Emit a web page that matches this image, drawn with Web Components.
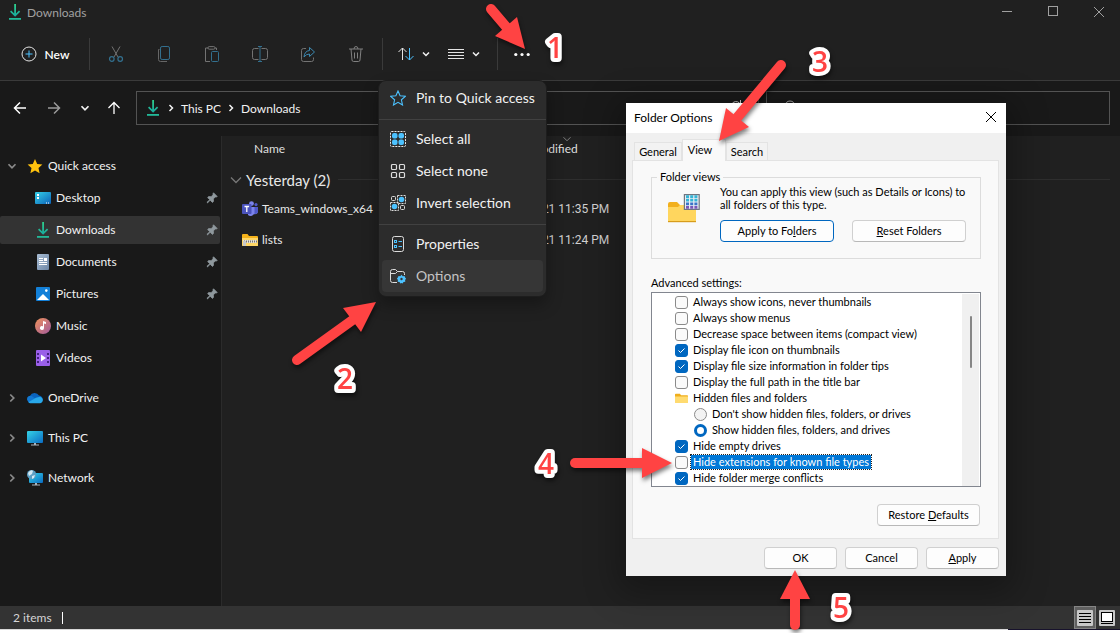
<!DOCTYPE html>
<html lang="en">
<head>
<meta charset="utf-8">
<meta name="viewport" content="width=device-width, initial-scale=1">
<title>Downloads</title>
<style>
    * { box-sizing: border-box; }
    body {
        margin: 0;
        min-height: 100vh;
        position: relative;
        display: flex;
        flex-direction: column;
        background: #ffffff;
        font-family: Lato, "Open Sans", sans-serif;
        font-size: 12px;
        color: #f2f2f2;
    }
    explorer-window { flex: 1; }
    footer { height: 4px; background: linear-gradient(90deg, #d8d8d8 90%, #17122c 90%) top / 100% 1px no-repeat #ffffff; }
    context-menu { position: absolute; left: 378px; top: 80px; }
    folder-options { position: absolute; left: 626px; top: 103px; }
    callout-layer { position: absolute; left: 0; top: 0; }
</style>
</head>
<body>
    <explorer-window>
        <title-bar slot="title">Downloads</title-bar>
        <command-bar slot="commands"></command-bar>
        <address-bar slot="address"></address-bar>
        <side-nav slot="nav">
            <nav-item icon="star" chevron="down">Quick access</nav-item>
            <nav-item icon="desktop" child pinned>Desktop</nav-item>
            <nav-item icon="download" child pinned selected>Downloads</nav-item>
            <nav-item icon="document" child pinned>Documents</nav-item>
            <nav-item icon="picture" child pinned>Pictures</nav-item>
            <nav-item icon="music" child>Music</nav-item>
            <nav-item icon="video" child>Videos</nav-item>
            <nav-item icon="cloud" chevron="right" root>OneDrive</nav-item>
            <nav-item icon="pc" chevron="right" root>This PC</nav-item>
            <nav-item icon="network" chevron="right" root>Network</nav-item>
        </side-nav>
        <file-list slot="files"></file-list>
        <status-bar slot="status">2 items</status-bar>
    </explorer-window>
    <footer></footer>

    <context-menu>
        <menu-item icon="starline">Pin to Quick access</menu-item>
        <hr>
        <menu-item icon="selall">Select all</menu-item>
        <menu-item icon="selnone">Select none</menu-item>
        <menu-item icon="selinv">Invert selection</menu-item>
        <hr>
        <menu-item icon="props">Properties</menu-item>
        <menu-item icon="options" active>Options</menu-item>
    </context-menu>

    <folder-options heading="Folder Options">
        <option-row>Always show icons, never thumbnails</option-row>
        <option-row>Always show menus</option-row>
        <option-row>Decrease space between items (compact view)</option-row>
        <option-row checked>Display file icon on thumbnails</option-row>
        <option-row checked>Display file size information in folder tips</option-row>
        <option-row>Display the full path in the title bar</option-row>
        <option-row type="folder">Hidden files and folders</option-row>
        <option-row type="radio">Don't show hidden files, folders, or drives</option-row>
        <option-row type="radio" checked>Show hidden files, folders, and drives</option-row>
        <option-row checked>Hide empty drives</option-row>
        <option-row highlighted>Hide extensions for known file types</option-row>
        <option-row checked>Hide folder merge conflicts</option-row>
    </folder-options>

    <callout-layer></callout-layer>

<script>
const ICONS = {
    download: `<defs><linearGradient id="g" x1="0" y1="0" x2="0" y2="1"><stop offset="0" stop-color="#2fd08b"/><stop offset="1" stop-color="#17a8a0"/></linearGradient></defs>
        <path d="M7.2 0h1.8v9.6l3-3 1.2 1.2-5.1 5-5.1-5 1.2-1.2 3 3z" fill="url(#g)"/><path d="M2 14h12v1.8H2z" fill="#22b999"/>`,
    star: `<path d="M8 1l2.2 4.9 5.2.5-3.9 3.6 1.1 5.3L8 12.6l-4.6 2.7 1.1-5.3L.6 6.4l5.2-.5z" fill="#ffc20e"/>`,
    desktop: `<defs><linearGradient id="g" x1="0" y1="0" x2="1" y2="1"><stop offset="0" stop-color="#34d0e8"/><stop offset="1" stop-color="#0c62b8"/></linearGradient></defs>
        <rect y="2" width="16" height="12" rx="1" fill="url(#g)"/><path d="M2 4h2v2H2zM2 7h2v2H2zM11 12.5h1v1h-1zM13 12.5h1v1h-1z" fill="#fff"/>`,
    document: `<defs><linearGradient id="g" x1="0" y1="0" x2="1" y2="1"><stop offset="0" stop-color="#a9bdd4"/><stop offset="1" stop-color="#6c86a6"/></linearGradient></defs>
        <rect x="2" width="12" height="16" rx="1" fill="url(#g)"/><path d="M4 4h4v1H4zM4 6h4v1H4zM9 4h3v3H9zM4 8h8v1H4zM4 10h8v1H4z" fill="#fff"/>`,
    picture: `<rect x="1" y="1" width="14" height="14" rx="1" fill="#1380d8"/><path d="M2 14l6-6 6 6z" fill="#fff"/><circle cx="11.3" cy="4.6" r="1.3" fill="#fff"/>`,
    music: `<defs><linearGradient id="g" x1="0" y1="0" x2="1" y2="1"><stop offset="0" stop-color="#f0925a"/><stop offset="1" stop-color="#a05a9e"/></linearGradient></defs>
        <circle cx="8" cy="8" r="8" fill="url(#g)"/><path d="M8 3l3 1v2L9 5.4V10a2 2 0 1 1-1-1.7z" fill="#fff"/>`,
    video: `<rect x="1" width="14" height="16" rx="1" fill="#9a5fe8"/><path d="M2 3h2v2H2zM2 7h2v2H2zM2 11h2v2H2zM12 3h2v2h-2zM12 7h2v2h-2zM12 11h2v2h-2z" fill="#43207e"/><path d="M6 4.6L11 8l-5 3.4z" fill="#fff"/>`,
    cloud: `<path d="M3.4 12.5A3.4 3.4 0 0 1 3 6 5 5 0 0 1 12 5.6a3.6 3.6 0 0 1 3.4 5z" fill="#0a63bd"/><path d="M.2 10A3.3 3.3 0 0 1 4.6 6L14 12.4H3A3 3 0 0 1 .2 10z" fill="#1278d2"/><path d="M1.3 12.3L9 7.8l3-.9a3.3 3.3 0 0 1 3 5.4q-1 .9-2 .9H3.4q-1.3 0-2.1-.9z" fill="#28a8ea"/>`,
    pc: `<defs><linearGradient id="g" x1="0" y1="0" x2="1" y2="1"><stop offset="0" stop-color="#35d3e6"/><stop offset="1" stop-color="#0b6cc4"/></linearGradient></defs>
        <rect y="1" width="16" height="12" rx="1" fill="url(#g)"/><path d="M7 13h2v1.4h3v1H4v-1h3z" fill="#a9b4bd"/>`,
    network: `<defs><linearGradient id="g" x1="0" y1="0" x2="1" y2="1"><stop offset="0" stop-color="#35d3e6"/><stop offset="1" stop-color="#0b6cc4"/></linearGradient></defs>
        <rect x="2" y="3" width="14" height="10" rx="1" fill="url(#g)"/><path d="M8 13h2v1.6h3v1H5v-1h3z" fill="#a9b4bd"/><circle cx="4.6" cy="4.6" r="4.6" fill="#5d9fc4"/><path d="M1 3q3-4 5-2l-1 3-3 2zM5 6l3-1-1 3-2 1z" fill="#d4e9f4"/>`,
    pin: `<path d="M10 1l5 5-1.6.8-1-.3-2.6 2.7.2 3.3-1.5 1.4-3-3L2 14.6l-.8-.8L5 10.3 2.2 7.4l1.4-1.3 3.2.1L9.5 3.6 9.2 2.5z" fill="#8f989d" stroke="#8f989d"/>`,
    chevdown: `<path d="M4 6l4 4 4-4" fill="none" stroke="currentColor" stroke-width="2"/>`,
    chevthin: `<path d="M4 6l4 4 4-4" fill="none" stroke="currentColor"/>`,
    chevright: `<path d="M6 4l4 4-4 4" fill="none" stroke="currentColor" stroke-width="2"/>`,
    plus: `<circle cx="8" cy="8" r="7" fill="none" stroke="#e4e4e4"/><path d="M8 4.5v7M4.5 8h7" stroke="#4cc2ff"/>`,
    cut: `<path d="M4 0.5l6 10.5M12 .5L6 11" stroke="#737373" fill="none"/><g fill="none" stroke="#33708f" stroke-width="1.2"><circle cx="3.8" cy="13" r="2.3"/><circle cx="12.2" cy="13" r="2.3"/></g>`,
    copy: `<path d="M3.5 3.5h-1v10q0 2 2 2h6.5" fill="none" stroke="#666"/><rect x="4.5" y=".5" width="9" height="13" rx="1.6" fill="none" stroke="#33708f"/>`,
    paste: `<path d="M4 2H1.5v13.5H6M11 2h1.5v2" fill="none" stroke="#737373"/><rect x="4" y=".6" width="7" height="2.6" rx="1.2" fill="none" stroke="#737373"/><rect x="7.5" y="5.5" width="7" height="10" rx="1" fill="none" stroke="#33708f"/>`,
    rename: `<path d="M6.5 2.5h-4q-2 0-2 2v7q0 2 2 2h4M9.5 2.5h4q2 0 2 2v7q0 2-2 2h-4" fill="none" stroke="#737373"/><path d="M8 .5v15M6 .5h4M6 15.5h4" stroke="#33708f" fill="none"/>`,
    share: `<path d="M6 2.5H3.5q-2 0-2 2v9q0 2 2 2h8q2 0 2-2v-2" fill="none" stroke="#737373"/><path d="M9.5 1.5l5 4.5-5 4.5V8Q6 8 4 11q.5-6 5.5-6.5z" fill="none" stroke="#3b88b0"/>`,
    trash: `<path d="M1 3h14M3 3l1 11q.1 1.5 1.6 1.5h4.8q1.5 0 1.6-1.5l1-11M6 3q0-2.5 2-2.5T10 3M6.5 6.5v6M9.5 6.5v6" fill="none" stroke="#808080"/>`,
    sort: `<path d="M4.5 14V2M.5 6l4-4 4 4" fill="none" stroke="#e4e4e4"/><path d="M11.5 2v12M7.5 10l4 4 4-4" fill="none" stroke="#4cc2ff"/>`,
    lines: `<path d="M0 3.5h16M0 6.5h16M0 9.5h16M0 12.5h16" stroke="#e4e4e4"/>`,
    dots: `<g fill="#fff"><circle cx="1.8" cy="8.5" r="1.6"/><circle cx="8" cy="8.5" r="1.6"/><circle cx="14.2" cy="8.5" r="1.6"/></g>`,
    back: `<path d="M14 8H2.5M8 2.5L2.5 8 8 13.5" fill="none" stroke="#fff" stroke-width="1.5"/>`,
    forward: `<path d="M2 8h11.5M8 2.5L13.5 8 8 13.5" fill="none" stroke="#9a9a9a" stroke-width="1.5"/>`,
    up: `<path d="M8 14V2.5M2.5 8L8 2.5 13.5 8" fill="none" stroke="#fff" stroke-width="1.3"/>`,
    refresh: `<path d="M13 7a5 5 0 1 1-1.5-4M12.5 0v3.5H9" fill="none" stroke="#ccc"/>`,
    search: `<circle cx="9" cy="6" r="5" fill="none" stroke="#aaa"/><path d="M5.5 9.5L2 13.5" stroke="#aaa"/>`,
    min: `<path d="M3 7.5h10" stroke="currentColor"/>`,
    max: `<rect x="3.5" y="2.5" width="9" height="9" fill="none" stroke="currentColor"/>`,
    close: `<path d="M3 3l10 10M13 3L3 13" stroke="currentColor"/>`,
    teams: `<circle cx="9.5" cy="2.6" r="2.4" fill="#7b83eb"/><circle cx="14" cy="3.6" r="1.6" fill="#5059c9"/><path d="M6 6h10v4.5a3 3 0 0 1-4 2.5 4 4 0 0 1-6 1z" fill="#7b83eb"/><path d="M12.5 6H16v4.5a3 3 0 0 1-3.5 2.5z" fill="#5059c9"/><rect y="3" width="9.5" height="10" rx="1" fill="#4b53bc"/><path d="M2.5 5.5h4.6M4.8 5.5v5.5" stroke="#fff" stroke-width="1.3"/>`,
    zip: `<path d="M0 3q0-1 1-1h4.5L7 4h8q1 0 1 1v8q0 1-1 1H1q-1 0-1-1z" fill="#f5b21a"/><path d="M0 6h16v7.5q0 .5-1 .5H1q-1 0-1-1z" fill="#ffd766"/><path d="M1 9.5h14" stroke="#e8e3d6" stroke-width="3"/><path d="M2 9.5h13" stroke="#767676" stroke-width="2" stroke-dasharray="1 1"/><rect x="1" y="9" width="3" height="5" fill="#c9c9c9"/>`,
    folder: `<path d="M0 3q0-1 1-1h5l1.5 2H15q1 0 1 1v8H0z" fill="#f0ae1c"/><path d="M0 5.5h16v7q0 1-1 1H1q-1 0-1-1z" fill="#ffdb70"/>`,
    starline: `<path d="M8 1l2.1 4.8 5.2.5-3.9 3.5 1.1 5.2L8 12.3 3.5 15l1.1-5.2L.7 6.3l5.2-.5z" fill="none" stroke="#4cc2ff" stroke-width="1.1"/>`,
    selall: `<rect x=".5" y=".5" width="15" height="15" rx="1" fill="none" stroke="#e8e8e8" stroke-dasharray="2 1"/><g fill="#4cc2ff"><rect x="2" y="2" width="5.5" height="5.5" rx="2"/><rect x="8.5" y="2" width="5.5" height="5.5" rx="2"/><rect x="2" y="8.5" width="5.5" height="5.5" rx="2"/><rect x="8.5" y="8.5" width="5.5" height="5.5" rx="2"/></g>`,
    selnone: `<g fill="none" stroke="#dcdcdc" stroke-width="1.2"><rect x="1.5" y="1.5" width="5" height="5" rx="1"/><rect x="9.5" y="1.5" width="5" height="5" rx="1"/><rect x="1.5" y="9.5" width="5" height="5" rx="1"/><rect x="9.5" y="9.5" width="5" height="5" rx="1"/></g>`,
    selinv: `<g fill="none" stroke="#dcdcdc"><rect x="1.5" y="1.5" width="4" height="4" rx="1"/><rect x="10.5" y="10.5" width="4" height="4" rx="1"/><path d="M7.5.5h8v8h-8zM.5 7.5h8v8h-8z" stroke-dasharray="2 1"/></g><circle cx="11.5" cy="4.5" r="2.8" fill="#4cc2ff"/><circle cx="4.5" cy="11.5" r="2.8" fill="#4cc2ff"/>`,
    props: `<rect x="2.5" y=".5" width="11" height="15" rx="2" fill="none" stroke="#dcdcdc"/><g fill="none" stroke="#4cc2ff"><rect x="4.5" y="4.5" width="2" height="2"/><rect x="4.5" y="9.5" width="2" height="2"/><path d="M8.5 5.5h3.5M8.5 10.5h3.5"/></g>`,
    options: `<path d="M7 14.5H2.5q-2 0-2-2v-9q0-2 2-2h3l2 2h5q2 0 2 2V7M.5 5.5H5.5l2-2" fill="none" stroke="#dcdcdc"/><path d="M11.5 6.8l1.2 1.4 1.8-.3.6 1.7 1 .9-1 1.5.2 1.7-1.8.2-.9 1.5-1.1-.5-1.1.5-.9-1.5-1.8-.2.2-1.7-1-1.5 1-.9.6-1.7 1.8.3z" fill="#4cc2ff"/><circle cx="11.5" cy="11" r="1.2" fill="#333"/>`,
    bigfolder: `<path d="M0 5.5q0-1 1-1h3.5l1.5 1.5H14v6.5H0z" fill="#f2b01e"/><path d="M0 7h5l1-1h8v8.5H0z" fill="#ffd65e"/><path d="M0 14h14v.6H0z" fill="#d79c1c"/><rect x="8.2" y=".8" width="7.4" height="7.4" fill="#e9eef4" stroke="#6f7680" stroke-width=".6"/><path d="M9 1.8h6M9 3.6h6" stroke="#35b5d6" stroke-width="1.4" stroke-dasharray="1.5 .6"/><path d="M9 5.4h6" stroke="#3a74c8" stroke-width="1.4" stroke-dasharray="1.5 .6"/><path d="M9 7.2h6" stroke="#7a58b8" stroke-width="1.3" stroke-dasharray="1.5 .6"/>`,
    details: `<rect width="16" height="16" rx="1" fill="#c8c8c8"/><path d="M2 3.5h12M2 6.5h12M2 9.5h12M2 12.5h12" stroke="#000"/>`,
    thumbs: `<rect width="16" height="16" rx="1" fill="#c8c8c8"/><rect x="2.5" y="2.5" width="11" height="9" fill="#fff" stroke="#000"/><path d="M2 13.5h12" stroke="#000"/>`
};

class BaseElement extends HTMLElement {
    constructor() {
        super();
        this.attachShadow({ mode: "open" });
    }

    connectedCallback() {
        const template = document.createElement("template");
        template.innerHTML = `
            <style>
                *, :host { box-sizing: border-box; }
                button { font: inherit; color: inherit; background: none; border: 0; padding: 0; margin: 0; }
                ${this.getStyles()}
            </style>
            ${this.getMarkup()}
        `;
        this.shadowRoot.appendChild(template.content.cloneNode(true));
    }
}

class FxIcon extends BaseElement {
    getStyles() {
        return `
            :host { display: inline-flex; flex: none; width: var(--icon-size, 16px); height: var(--icon-size, 16px); }
            svg { width: 100%; height: 100%; display: block; }
        `;
    }
    getMarkup() {
        return `<svg viewBox="0 0 16 16" aria-hidden="true">${ICONS[this.getAttribute("name")]}</svg>`;
    }
}

class ExplorerWindow extends BaseElement {
    getStyles() {
        return `
            :host { display: flex; flex-direction: column; background: #202020; }
            .content { flex: 1; display: flex; }
            .files { flex: 1; min-width: 0; }
        `;
    }
    getMarkup() {
        return `
            <slot name="title"></slot>
            <slot name="commands"></slot>
            <slot name="address"></slot>
            <div class="content">
                <slot name="nav"></slot>
                <div class="files"><slot name="files"></slot></div>
            </div>
            <slot name="status"></slot>
        `;
    }
}

class TitleBar extends BaseElement {
    getStyles() {
        return `
            :host { display: flex; align-items: center; height: 24px; padding-left: 7px; color: #a0a0a0; }
            .name { flex: 1; display: flex; align-items: center; gap: 4px; }
            .controls { display: flex; gap: 4px; }
            button { width: 42px; height: 24px; display: flex; align-items: center; justify-content: center; }
        `;
    }
    getMarkup() {
        return `
            <div class="name"><fx-icon name="download"></fx-icon><span><slot></slot></span></div>
            <div class="controls">
                <button aria-label="Minimize"><fx-icon name="min"></fx-icon></button>
                <button aria-label="Maximize"><fx-icon name="max"></fx-icon></button>
                <button aria-label="Close"><fx-icon name="close"></fx-icon></button>
            </div>
        `;
    }
}

class CommandBar extends BaseElement {
    getStyles() {
        return `
            :host { display: flex; align-items: center; height: 57px; padding: 4px 8px 0; border-bottom: 1px solid #3a3a3a; }
            button { display: flex; align-items: center; justify-content: center; height: 32px; }
            .new { width: 74px; gap: 8px; font-weight: 600; color: #ffffff; }
            .tools { display: flex; gap: 10px; }
            .tools button { width: 38px; }
            .drop { width: 50px; gap: 6px; }
            .drop fx-icon + fx-icon { --icon-size: 12px; }
            .more { width: 34px; }
            .sep { width: 1px; height: 32px; margin: 0 7px; background: #3a3a3a; }
        `;
    }
    getMarkup() {
        const tools = ["cut", "copy", "paste", "rename", "share", "trash"];
        return `
            <button class="new"><fx-icon name="plus"></fx-icon>New</button>
            <span class="sep"></span>
            <div class="tools">
                ${tools.map(name => `<button disabled aria-label="${name}"><fx-icon name="${name}"></fx-icon></button>`).join("")}
            </div>
            <span class="sep"></span>
            <button class="drop" aria-label="Sort"><fx-icon name="sort"></fx-icon><fx-icon name="chevdown"></fx-icon></button>
            <button class="drop" aria-label="View"><fx-icon name="lines"></fx-icon><fx-icon name="chevdown"></fx-icon></button>
            <span class="sep"></span>
            <button class="more" aria-label="See more"><fx-icon name="dots"></fx-icon></button>
        `;
    }
}

class AddressBar extends BaseElement {
    getStyles() {
        return `
            :host { display: flex; align-items: center; gap: 7px; height: 55px; padding: 0 10px 1px 3px; background: #191919; }
            .moves { display: flex; }
            .moves button { width: 34px; height: 32px; display: flex; align-items: center; justify-content: center; }
            .moves .recent { width: 28px; --icon-size: 14px; }
            .moves .up { width: 30px; }
            .box { display: flex; align-items: center; height: 34px; border: 1px solid #535353; }
            .path { flex: 625; padding: 0 14px 0 8px; gap: 4px; }
            .path a { color: inherit; text-decoration: none; }
            .path .crumb { --icon-size: 12px; }
            .path .spacer { flex: 1; }
            .search { flex: 342; padding-left: 14px; }
            input { flex: 1; min-width: 0; background: none; border: 0; color: inherit; font: inherit; outline: none; }
        `;
    }
    getMarkup() {
        return `
            <div class="moves">
                <button aria-label="Back"><fx-icon name="back"></fx-icon></button>
                <button aria-label="Forward"><fx-icon name="forward"></fx-icon></button>
                <button class="recent" aria-label="Recent"><fx-icon name="chevdown"></fx-icon></button>
                <button class="up" aria-label="Up"><fx-icon name="up"></fx-icon></button>
            </div>
            <div class="box path">
                <fx-icon name="download"></fx-icon>
                <fx-icon class="crumb" name="chevright"></fx-icon>
                <a href="#pc">This PC</a>
                <fx-icon class="crumb" name="chevright"></fx-icon>
                <a href="#downloads">Downloads</a>
                <span class="spacer"></span>
                <fx-icon name="refresh"></fx-icon>
            </div>
            <div class="box search">
                <fx-icon name="search"></fx-icon>
                <input type="text" aria-label="Search">
            </div>
        `;
    }
}

class SideNav extends BaseElement {
    getStyles() {
        return `
            :host { display: flex; flex-direction: column; gap: 4px; flex: none; width: 222px; padding: 16px 1px 0 0; background: #191919; border-right: 1px solid #2b2b2b; }
        `;
    }
    getMarkup() {
        return `<slot></slot>`;
    }
}

class NavItem extends BaseElement {
    getStyles() {
        return `
            :host { display: block; }
            :host([root]) { margin-top: 8px; }
            a { display: flex; align-items: center; height: 28px; padding: 0 2px 0 5px; border-radius: 2px; color: inherit; text-decoration: none; }
            :host([selected]) a { background: #333333; }
            :host([child]) a { padding-left: 35px; }
            .chev { width: 22px; display: flex; color: #8a8a8a; --icon-size: 14px; }
            .label { flex: 1; padding: 0 0 2px 5px; }
            .pin { --icon-size: 12px; }
        `;
    }
    getMarkup() {
        const chevron = this.getAttribute("chevron");
        return `
            <a href="#">
                ${chevron ? `<span class="chev"><fx-icon name="chev${chevron}"></fx-icon></span>` : ""}
                <fx-icon name="${this.getAttribute("icon")}"></fx-icon>
                <span class="label"><slot></slot></span>
                ${this.hasAttribute("pinned") ? `<fx-icon class="pin" name="pin"></fx-icon>` : ""}
            </a>
        `;
    }
}

class FileList extends BaseElement {
    getStyles() {
        return `
            :host { display: block; color: #e8e8e8; }
            table { width: 100%; table-layout: fixed; border-collapse: collapse; }
            th, td { padding: 0; text-align: left; font-weight: 400; white-space: nowrap; }
            col.name { width: 281px; }
            thead th { height: 26px; padding-bottom: 2px; color: #dedede; }
            thead th:first-child { padding-left: 32px; }
            .sorted { position: relative; }
            .sorted fx-icon { position: absolute; left: 57px; top: -4px; --icon-size: 14px; color: #8a8a8a; }
            .group { height: 32px; padding-top: 3px; font-size: 15px; }
            .group div { display: flex; align-items: center; padding: 0 10px 0 4px; }
            .group fx-icon { --icon-size: 20px; color: #777777; }
            .group i { flex: 1; height: 1px; margin-left: 8px; background: #2e2e2e; }
            tbody td { height: 31px; padding-bottom: 2px; }
            .date { padding-left: 2px; font-family: Roboto, sans-serif; color: #d0d0d0; }
            .file { display: flex; align-items: center; gap: 4px; padding-left: 20px; }
        `;
    }
    getMarkup() {
        return `
            <table>
                <colgroup><col class="name"><col></colgroup>
                <thead>
                    <tr><th>Name</th><th class="sorted"><fx-icon name="chevthin"></fx-icon>Date modified</th></tr>
                </thead>
                <tbody>
                    <tr><th class="group" colspan="2"><div><fx-icon name="chevthin"></fx-icon>Yesterday (2)<i></i></div></th></tr>
                    <tr><td><div class="file"><fx-icon name="teams"></fx-icon>Teams_windows_x64</div></td><td class="date">9/1/2021 11:35 PM</td></tr>
                    <tr><td><div class="file"><fx-icon name="zip"></fx-icon>lists</div></td><td class="date">9/1/2021 11:24 PM</td></tr>
                </tbody>
            </table>
        `;
    }
}

class StatusBar extends BaseElement {
    getStyles() {
        return `
            :host { display: flex; align-items: center; height: 23px; padding: 0 2px 0 13px; background: #333333; color: #d6d6d6; }
            .count { flex: 1; display: flex; align-items: center; gap: 10px; }
            .count i { width: 1px; height: 12px; background: #ffffff; }
            button { width: 22px; height: 23px; display: flex; align-items: center; justify-content: center; }
            .on { background: #606060; border: 1px solid #858585; }
        `;
    }
    getMarkup() {
        return `
            <div class="count"><span><slot></slot></span><i></i></div>
            <button class="on" aria-label="Details view"><fx-icon name="details"></fx-icon></button>
            <button aria-label="Large icons view"><fx-icon name="thumbs"></fx-icon></button>
        `;
    }
}

class ContextMenu extends BaseElement {
    getStyles() {
        return `
            :host { display: flex; flex-direction: column; width: 169px; padding: 1px 0 4px; background: #2c2c2c; border: 1px solid #1d1d1d; border-radius: 8px; box-shadow: 0 8px 16px rgba(0, 0, 0, .3); font-size: 14px; }
            ::slotted(hr) { width: 100%; height: 1px; margin: 5px 0 3px; border: 0; background: #414141; }
        `;
    }
    getMarkup() {
        return `<slot></slot>`;
    }
}

class MenuItem extends BaseElement {
    getStyles() {
        return `
            :host { display: block; padding: 0 3px; }
            button { display: flex; align-items: center; gap: 10px; width: 100%; height: 32px; padding-left: 8px; border-radius: 4px; white-space: nowrap; }
            :host([active]) button { background: #363636; color: #c4c4c4; }
            span { padding-bottom: 2px; }
        `;
    }
    getMarkup() {
        return `<button><fx-icon name="${this.getAttribute("icon")}"></fx-icon><span><slot></slot></span></button>`;
    }
}

class PushButton extends BaseElement {
    getStyles() {
        return `
            :host { display: block; width: 73px; }
            button { display: block; width: 100%; height: 22px; background: #fdfdfd; border: 1px solid #d0d0d0; border-bottom-color: #b8b8b8; border-radius: 4px; line-height: 20px; text-align: center; white-space: nowrap; }
            :host([primary]) button { border-color: #0067c0; }
        `;
    }
    getMarkup() {
        return `<button><slot></slot></button>`;
    }
}

class OptionRow extends BaseElement {
    getStyles() {
        return `
            :host { display: block; padding-left: 22px; }
            :host([type="radio"]) { padding-left: 41px; }
            .row { display: flex; align-items: center; height: 16px; gap: 3px; --icon-size: 13px; }
            input { appearance: none; flex: none; width: 13px; height: 13px; margin: 0; border: 1px solid #8a8a8a; border-radius: 3px; background: #fafafa; }
            input[type="radio"] { border-radius: 50%; background: #f3f3f3; }
            input[type="checkbox"]:checked {
                border-color: #0067c0;
                background: #0067c0 url('data:image/svg+xml,<svg xmlns="http://www.w3.org/2000/svg" viewBox="0 0 11 11"><path d="M2.5 5.5l2 2 4-4" fill="none" stroke="white"/></svg>');
            }
            input[type="radio"]:checked { border: 3px solid #0067c0; background: #ffffff; }
            .text { padding: 0 2px; line-height: 14px; white-space: nowrap; }
            :host([highlighted]) .text { background: #0078d7; color: #ffffff; outline: 1px dotted #222222; }
        `;
    }
    getMarkup() {
        const type = this.getAttribute("type") || "checkbox";
        if (type === "folder") {
            return `<div class="row"><fx-icon name="folder"></fx-icon><span class="text"><slot></slot></span></div>`;
        }
        const checked = this.hasAttribute("checked") ? "checked" : "";
        return `<label class="row"><input type="${type}" ${checked}><span class="text"><slot></slot></span></label>`;
    }
}

class FolderOptions extends BaseElement {
    getStyles() {
        return `
            :host { display: block; width: 380px; background: #f0f0f0; color: #000000; font-size: 11px; box-shadow: 0 8px 32px 8px rgba(0, 0, 0, .3); }
            header { display: flex; align-items: center; justify-content: space-between; height: 30px; padding: 0 7px 2px 8px; background: #ffffff; font-size: 12px; }
            header button { display: flex; }
            .tabs { display: flex; align-items: flex-end; height: 27px; padding-left: 8px; }
            .tabs button { height: 18px; width: 42px; background: #f2f2f2; border: 1px solid #e3e3e3; border-bottom: 0; }
            .tabs button:first-child { width: 48px; }
            .tabs .on { height: 22px; width: 44px; margin-bottom: -1px; padding: 0 8px 3px 0; background: #f9f9f9; position: relative; }
            .panel { margin: 0 7px 0 6px; padding: 9px 17px 12px 18px; background: #f9f9f9; border: 1px solid #e3e3e3; }
            fieldset { min-width: 0; height: 89px; margin: 0; padding: 1px 14px 0 16px; border: 1px solid #dcdcdc; }
            legend { padding: 0 3px; margin-left: -11px; line-height: 14px; }
            .views { display: grid; grid-template-columns: 32px minmax(0, 1fr); gap: 0 20px; }
            .views fx-icon { --icon-size: 32px; margin-top: 8px; }
            .views p { margin: 0; line-height: 13px; white-space: nowrap; }
            .pair { display: flex; justify-content: space-between; margin-top: 9px; }
            .pair push-button { width: 114px; }
            h2 { margin: 17px 0 2px; font-size: 11px; font-weight: 400; line-height: 14px; }
            .list { display: flex; border: 1px solid #82868f; background: #ffffff; padding: 1px 1px 0; }
            .rows { flex: 1; }
            .track { width: 17px; background: #f0f0f0; padding: 22px 7px 0 8px; }
            .thumb { height: 52px; background: #868686; border-radius: 1px; }
            .restore { width: 103px; margin: 17px 1px 0 auto; }
            footer { display: flex; justify-content: flex-end; gap: 8px; padding: 8px 7px 7px; }
        `;
    }
    getMarkup() {
        return `
            <header><span>${this.getAttribute("heading")}</span><button aria-label="Close"><fx-icon name="close"></fx-icon></button></header>
            <div class="tabs"><button>General</button><button class="on">View</button><button>Search</button></div>
            <div class="panel">
                <fieldset>
                    <legend>Folder views</legend>
                    <div class="views">
                        <fx-icon name="bigfolder"></fx-icon>
                        <div>
                            <p>You can apply this view (such as Details or Icons) to<br>all folders of this type.</p>
                            <div class="pair">
                                <push-button primary>Apply to Fo<u>l</u>ders</push-button>
                                <push-button><u>R</u>eset Folders</push-button>
                            </div>
                        </div>
                    </div>
                </fieldset>
                <h2>Advanced settings:</h2>
                <div class="list">
                    <div class="rows"><slot></slot></div>
                    <div class="track"><div class="thumb"></div></div>
                </div>
                <push-button class="restore">Restore <u>D</u>efaults</push-button>
            </div>
            <footer>
                <push-button>OK</push-button>
                <push-button>Cancel</push-button>
                <push-button><u>A</u>pply</push-button>
            </footer>
        `;
    }
}

// numbered steps and the arrows that go with them
class CalloutLayer extends BaseElement {
    getStyles() {
        return `
            :host { display: block; pointer-events: none; }
            svg { display: block; filter: drop-shadow(1px 3px 2px rgba(0, 0, 0, .5)); }
            path { fill: #ff4343; }
            line { stroke: #ff4343; stroke-width: 10; stroke-linecap: round; }
            text { font: 600 28px "Open Sans", sans-serif; text-anchor: middle; fill: #ff4343; stroke: #ffffff; stroke-width: 8; stroke-linejoin: round; paint-order: stroke; }
        `;
    }
    getMarkup() {
        return `
            <svg width="1120" height="633" viewBox="0 0 1120 633">
                <line x1="491" y1="9" x2="508" y2="29"/><path d="M525 49L495 36 517 17z"/>
                <line x1="297" y1="360" x2="354" y2="319"/><path d="M376 302L361 332 343 308z"/>
                <line x1="781" y1="65" x2="736" y2="119"/><path d="M719 141L726 108 749 127z"/>
                <line x1="575" y1="463" x2="644" y2="463"/><path d="M672 463L642 448V478z"/>
                <line x1="795" y1="625" x2="795" y2="597"/><path d="M795 570L780 599H810z"/>
                <text x="555" y="58">1</text>
                <text x="345" y="389">2</text>
                <text x="820" y="72">3</text>
                <text x="546" y="474">4</text>
                <text x="841" y="618">5</text>
            </svg>
        `;
    }
}

customElements.define("fx-icon", FxIcon);
customElements.define("explorer-window", ExplorerWindow);
customElements.define("title-bar", TitleBar);
customElements.define("command-bar", CommandBar);
customElements.define("address-bar", AddressBar);
customElements.define("side-nav", SideNav);
customElements.define("nav-item", NavItem);
customElements.define("file-list", FileList);
customElements.define("status-bar", StatusBar);
customElements.define("context-menu", ContextMenu);
customElements.define("menu-item", MenuItem);
customElements.define("push-button", PushButton);
customElements.define("option-row", OptionRow);
customElements.define("folder-options", FolderOptions);
customElements.define("callout-layer", CalloutLayer);
</script>
</body>
</html>
